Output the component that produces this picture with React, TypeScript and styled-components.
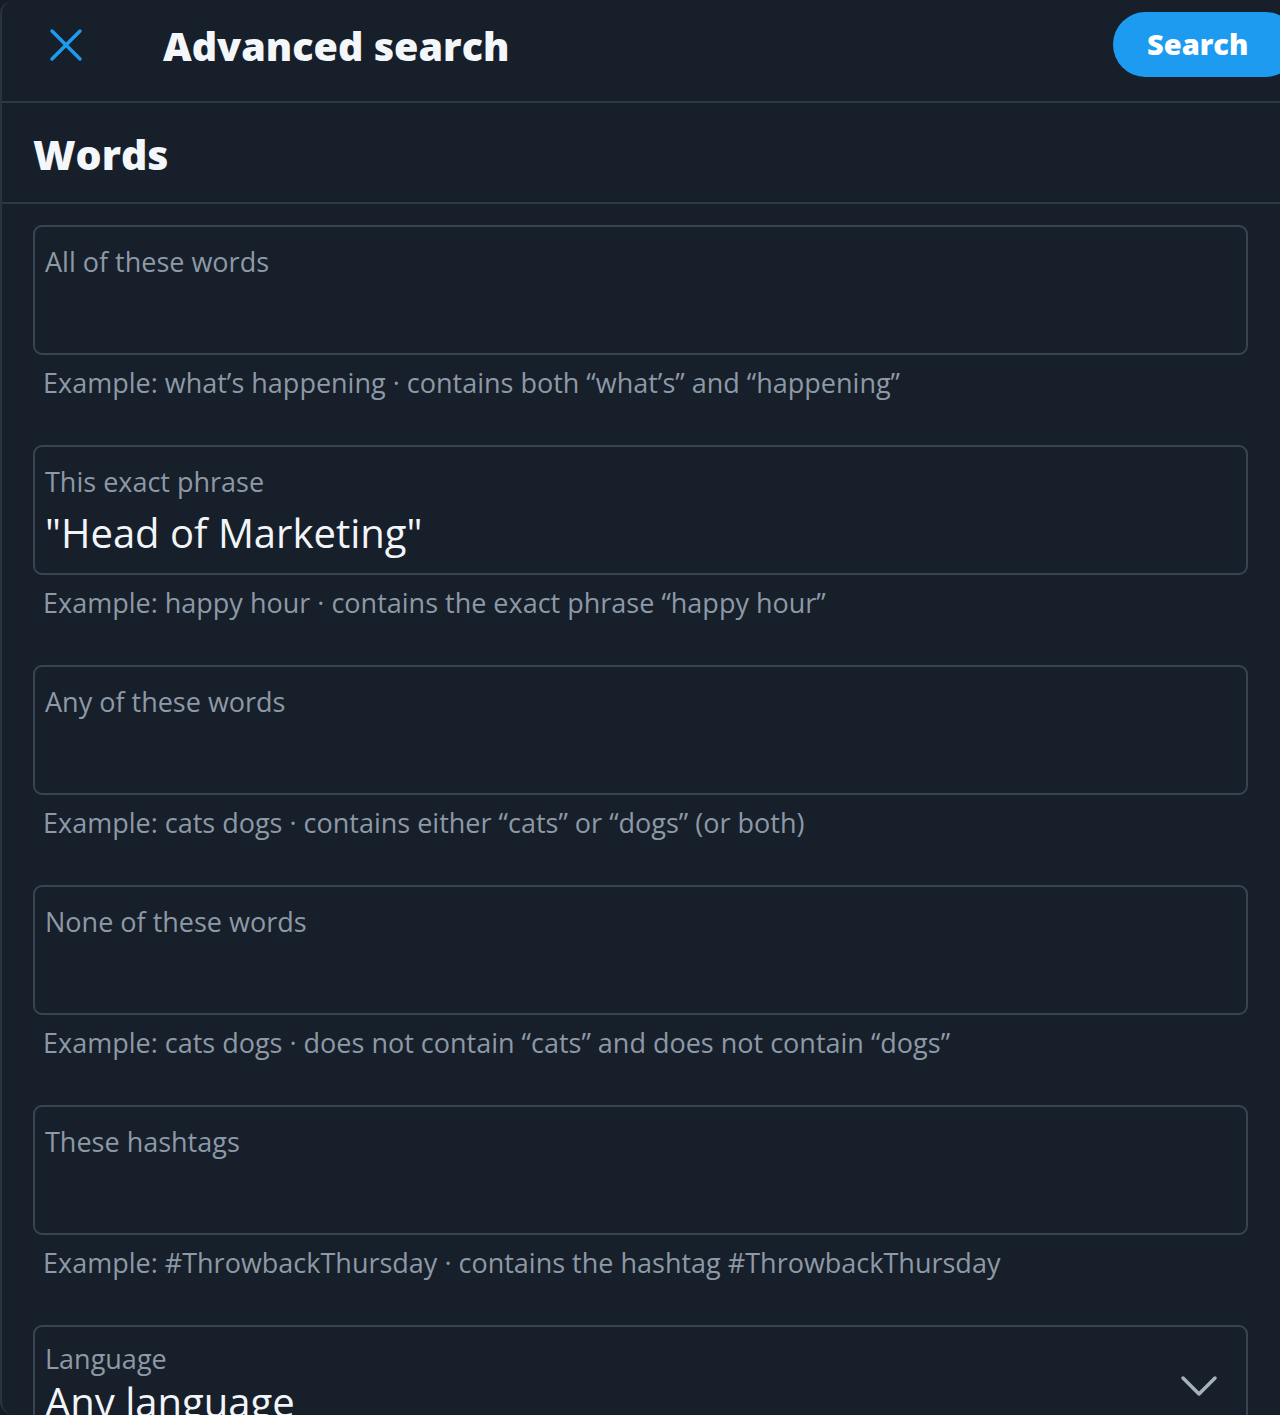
import React from "react";
import styled, { createGlobalStyle } from "styled-components";

const Global = createGlobalStyle`
  html, body { margin: 0; padding: 0; background: #151c26; }
  body { font-family: "Open Sans", "Noto Sans", sans-serif; overflow: hidden; }
  * { box-sizing: border-box; }
`;

const Modal = styled.div`
  width: 1280px;
  height: 1415px;
  background: #171f2a;
  border-left: 2px solid #2a3340;
  border-radius: 14px 0 0 14px;
  overflow: hidden;
  display: flex;
  flex-direction: column;
`;

const Header = styled.header`
  height: 103px;
  flex: none;
  display: flex;
  align-items: flex-start;
  padding: 0 0 0 46px;
  border-bottom: 2px solid #2e3844;
`;

const CloseButton = styled.button`
  width: 36px;
  height: 36px;
  padding: 0;
  margin-top: 27px;
  border: none;
  background: transparent;
  display: flex;
  align-items: center;
  justify-content: center;
`;

const Title = styled.h1`
  margin: 18px 0 0 79px;
  font-size: 39.5px;
  line-height: 56px;
  font-weight: 800;
  letter-spacing: 0;
  color: #f4f7fa;
  flex: 1;
`;

const SearchButton = styled.button`
  flex: none;
  height: 65px;
  width: 185px;
  margin: 12px -18px 0 0;
  border: none;
  border-radius: 33px;
  background: #1d9bf0;
  color: #ffffff;
  font-family: inherit;
  font-size: 29px;
  font-weight: 800;
  text-align: left;
  padding: 0 0 3px 34px;
`;

const SectionHeader = styled.div`
  height: 101px;
  flex: none;
  display: flex;
  align-items: center;
  padding-left: 31px;
  border-bottom: 2px solid #2e3844;
`;

const SectionTitle = styled.h2`
  margin: 2px 0 0;
  font-size: 41px;
  font-weight: 800;
  color: #f4f7fa;
`;

const Fields = styled.div`
  display: flex;
  flex-direction: column;
  gap: 44px;
  padding: 21px 32px 0 31px;
`;

const FieldGroup = styled.div`
  display: flex;
  flex-direction: column;
`;

const FieldBox = styled.div<{ $select?: boolean }>`
  height: 130px;
  flex: none;
  border: 2px solid #384452;
  border-radius: 9px;
  padding: ${(p) => (p.$select ? "14px" : "17px")} 28px 0 10px;
  display: flex;
  align-items: flex-start;
  justify-content: space-between;
`;

const FieldText = styled.div`
  display: flex;
  flex-direction: column;
`;

const Label = styled.span`
  font-size: 27px;
  line-height: 36px;
  color: #8d99a6;
`;

const Value = styled.span<{ $tight?: boolean }>`
  font-size: 40px;
  line-height: 50px;
  margin-top: ${(p) => (p.$tight ? "0" : "8px")};
  color: #f2f5f8;
`;

const Helper = styled.p`
  margin: 10px 0 0 10px;
  font-size: 27px;
  line-height: 36px;
  color: #8d99a6;
`;

const Chevron = styled.svg`
  margin-top: 34px;
`;

const fields = [
  {
    label: "All of these words",
    helper: "Example: what\u2019s happening \u00b7 contains both \u201cwhat\u2019s\u201d and \u201chappening\u201d",
  },
  {
    label: "This exact phrase",
    value: "\"Head of Marketing\"",
    helper: "Example: happy hour \u00b7 contains the exact phrase \u201chappy hour\u201d",
  },
  {
    label: "Any of these words",
    helper: "Example: cats dogs \u00b7 contains either \u201ccats\u201d or \u201cdogs\u201d (or both)",
  },
  {
    label: "None of these words",
    helper: "Example: cats dogs \u00b7 does not contain \u201ccats\u201d and does not contain \u201cdogs\u201d",
  },
  {
    label: "These hashtags",
    helper: "Example: #ThrowbackThursday \u00b7 contains the hashtag #ThrowbackThursday",
  },
];

export default function App() {
  return (
    <>
      <Global />
      <Modal>
        <Header>
          <CloseButton aria-label="Close">
            <svg width="34" height="34" viewBox="0 0 34 34">
              <path d="M3 3 L31 31 M31 3 L3 31" stroke="#1d9bf0" strokeWidth="3.5" strokeLinecap="round" />
            </svg>
          </CloseButton>
          <Title>Advanced search</Title>
          <SearchButton>Search</SearchButton>
        </Header>
        <SectionHeader>
          <SectionTitle>Words</SectionTitle>
        </SectionHeader>
        <Fields>
          {fields.map((f) => (
            <FieldGroup key={f.label}>
              <FieldBox>
                <FieldText>
                  <Label>{f.label}</Label>
                  {f.value && <Value>{f.value}</Value>}
                </FieldText>
              </FieldBox>
              <Helper>{f.helper}</Helper>
            </FieldGroup>
          ))}
          <FieldGroup>
            <FieldBox $select>
              <FieldText>
                <Label>Language</Label>
                <Value $tight>Any language</Value>
              </FieldText>
              <Chevron width="38" height="22" viewBox="0 0 38 22">
                <path d="M3 3 L19 19 L35 3" fill="none" stroke="#a7b1bc" strokeWidth="3.5" strokeLinecap="round" strokeLinejoin="round" />
              </Chevron>
            </FieldBox>
          </FieldGroup>
        </Fields>
      </Modal>
    </>
  );
}
